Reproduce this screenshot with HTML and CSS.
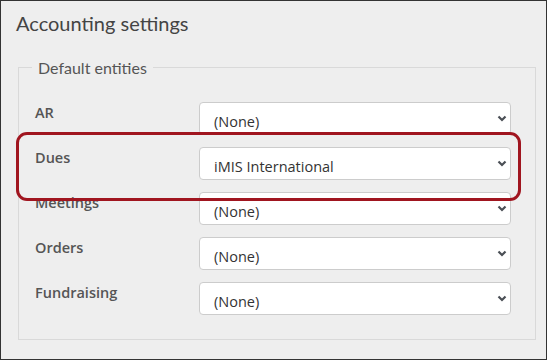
FILE: index.html
```html
<!DOCTYPE html>
<html lang="en">
<head>
    <meta charset="UTF-8">
    <meta name="viewport" content="width=device-width, initial-scale=1.0">
    <title>Accounting settings</title>
    <link rel="stylesheet" href="styles.css">
</head>
<body>
    <div class="frame">
        <h2 class="page-title">Accounting settings</h2>

        <fieldset class="entities">
            <legend>Default entities</legend>

            <div class="entity-list">
                <div class="entity-row">
                    <label for="ar">AR</label>
                    <div class="select-wrap">
                        <select id="ar"><option>(None)</option></select>
                        <svg class="chevron" width="10" height="7" viewBox="0 0 10 7"><path d="M1.5 1.5 L5 5 L8.5 1.5" fill="none" stroke="#4a4f55" stroke-width="2.2"/></svg>
                    </div>
                </div>

                <div class="entity-row">
                    <label for="dues">Dues</label>
                    <div class="select-wrap">
                        <select id="dues"><option>iMIS International</option></select>
                        <svg class="chevron" width="10" height="7" viewBox="0 0 10 7"><path d="M1.5 1.5 L5 5 L8.5 1.5" fill="none" stroke="#4a4f55" stroke-width="2.2"/></svg>
                    </div>
                </div>

                <div class="entity-row">
                    <label for="meetings">Meetings</label>
                    <div class="select-wrap">
                        <select id="meetings"><option>(None)</option></select>
                        <svg class="chevron" width="10" height="7" viewBox="0 0 10 7"><path d="M1.5 1.5 L5 5 L8.5 1.5" fill="none" stroke="#4a4f55" stroke-width="2.2"/></svg>
                    </div>
                </div>

                <div class="entity-row">
                    <label for="orders">Orders</label>
                    <div class="select-wrap">
                        <select id="orders"><option>(None)</option></select>
                        <svg class="chevron" width="10" height="7" viewBox="0 0 10 7"><path d="M1.5 1.5 L5 5 L8.5 1.5" fill="none" stroke="#4a4f55" stroke-width="2.2"/></svg>
                    </div>
                </div>

                <div class="entity-row">
                    <label for="fundraising">Fundraising</label>
                    <div class="select-wrap">
                        <select id="fundraising"><option>(None)</option></select>
                        <svg class="chevron" width="10" height="7" viewBox="0 0 10 7"><path d="M1.5 1.5 L5 5 L8.5 1.5" fill="none" stroke="#4a4f55" stroke-width="2.2"/></svg>
                    </div>
                </div>
            </div>
        </fieldset>

        <div class="highlight"></div>
    </div>
</body>
</html>
```

FILE: styles.css
```css
body {
    margin: 0;
    font-family: "Open Sans", Arial, sans-serif;
}
.frame {
    position: relative;
    width: 547px;
    height: 360px;
    box-sizing: border-box;
    border: 1px solid #333;
    background-color: #eeeeee;
    padding: 8px 10px 0 17px;
}
.page-title {
    margin: 0 0 0 -2px;
    font-family: "Lato", Arial, sans-serif;
    font-size: 20px;
    font-weight: normal;
    color: #444;
    line-height: 28px;
}
.entities {
    margin: 21px 0 0 0;
    border: 1px solid #d9d9d9;
    padding: 0;
}
.entities legend {
    margin-left: 13px;
    padding: 0 6px;
    font-family: "Lato", Arial, sans-serif;
    font-size: 16px;
    color: #555;
}
.entity-list {
    display: flex;
    flex-direction: column;
    gap: 12px;
    padding: 25px 24px 24px 16px;
}
.entity-row {
    display: flex;
    align-items: flex-start;
}
.entity-row label {
    width: 164px;
    padding-top: 1px;
    font-size: 14.5px;
    font-weight: 600;
    color: #555;
}
.select-wrap {
    position: relative;
    width: 312px;
}
.select-wrap select {
    display: block;
    width: 100%;
    height: 33px;
    box-sizing: border-box;
    appearance: none;
    -webkit-appearance: none;
    border: 1px solid #ccc;
    border-radius: 4px;
    background-color: #fff;
    padding: 5px 30px 0 14px;
    font-family: "Open Sans", Arial, sans-serif;
    font-size: 14.5px;
    color: #333;
}
.chevron {
    position: absolute;
    right: 4px;
    top: 13px;
}
.highlight {
    position: absolute;
    left: 15px;
    top: 131px;
    width: 505px;
    height: 69px;
    box-sizing: border-box;
    border: 3px solid #a0151f;
    border-radius: 11px;
}
```
